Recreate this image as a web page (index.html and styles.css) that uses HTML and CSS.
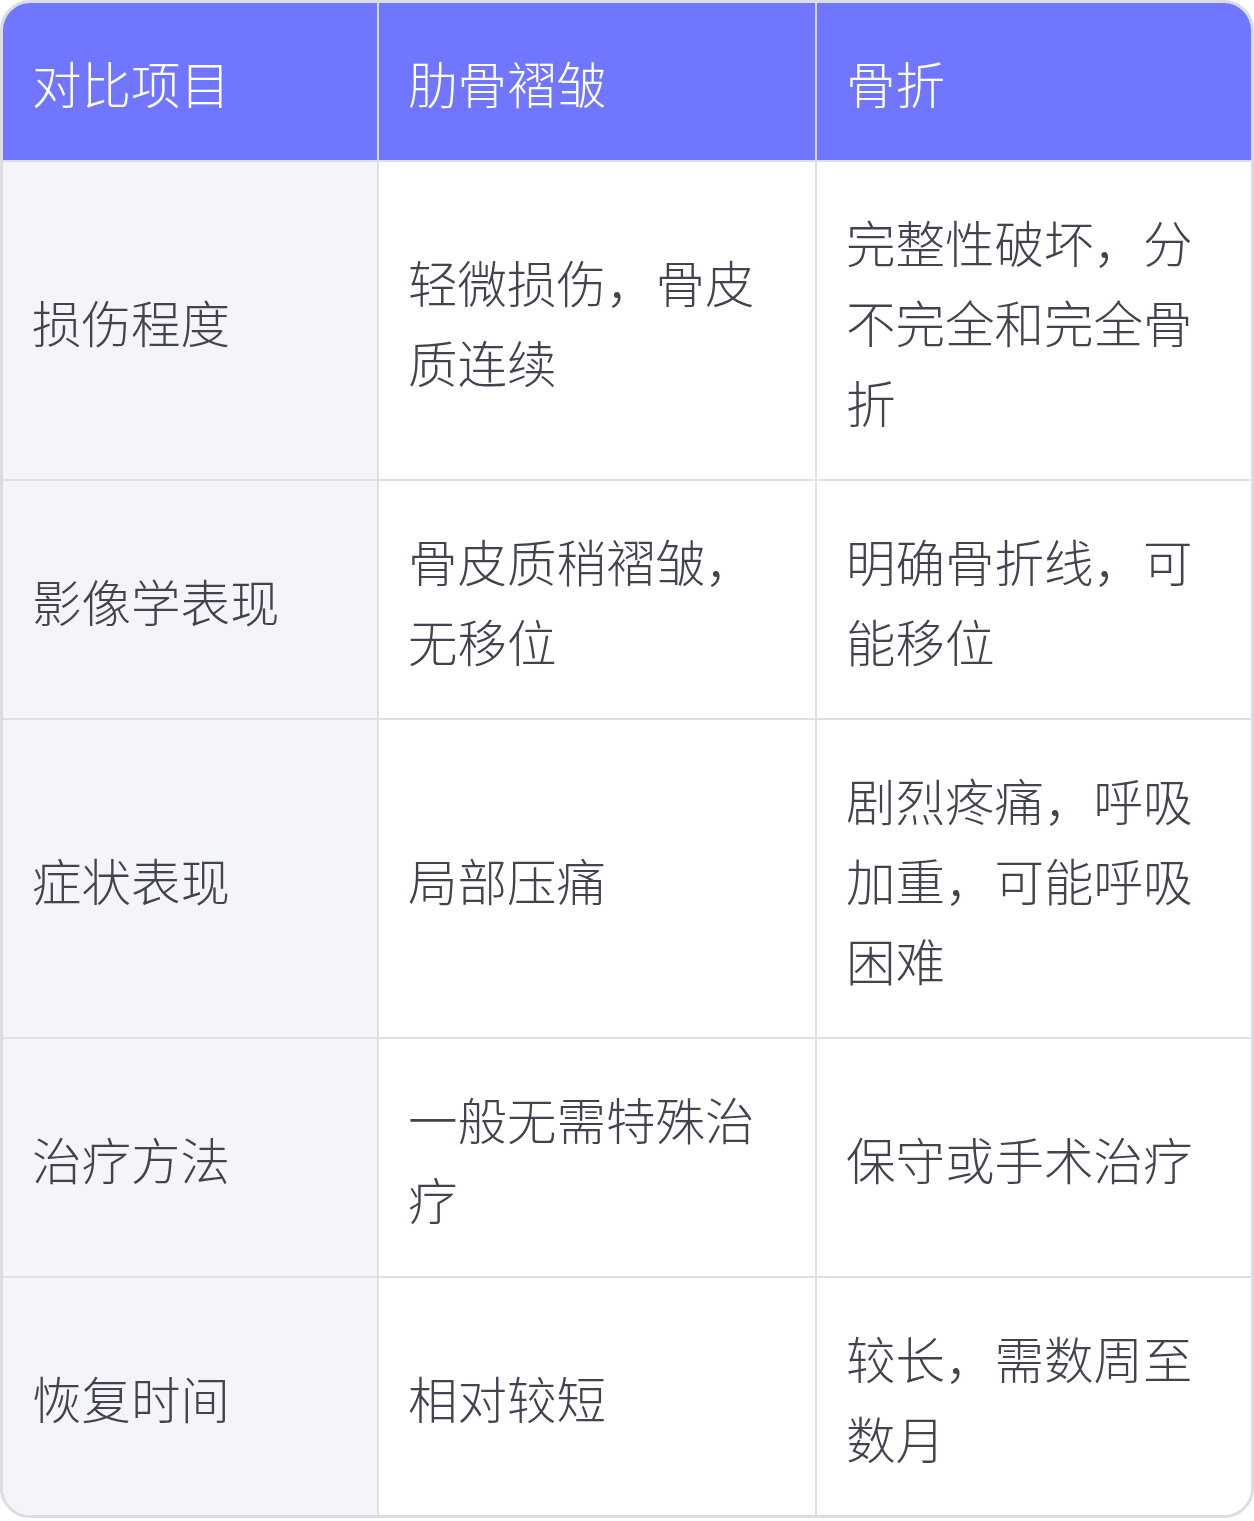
FILE: index.html
```html
<!DOCTYPE html>
<html lang="zh-CN">
<head>
<meta charset="utf-8">
<title>肋骨褶皱与骨折对比</title>
<link rel="stylesheet" href="styles.css">
</head>
<body>
<div class="table">
  <div class="cell head">对比项目</div>
  <div class="cell head">肋骨褶皱</div>
  <div class="cell head last-col">骨折</div>

  <div class="cell label">损伤程度</div>
  <div class="cell">轻微损伤，骨皮质连续</div>
  <div class="cell last-col">完整性破坏，分不完全和完全骨折</div>

  <div class="cell label">影像学表现</div>
  <div class="cell">骨皮质稍褶皱，无移位</div>
  <div class="cell last-col">明确骨折线，可能移位</div>

  <div class="cell label">症状表现</div>
  <div class="cell">局部压痛</div>
  <div class="cell last-col">剧烈疼痛，呼吸加重，可能呼吸困难</div>

  <div class="cell label">治疗方法</div>
  <div class="cell">一般无需特殊治疗</div>
  <div class="cell last-col">保守或手术治疗</div>

  <div class="cell label last-row">恢复时间</div>
  <div class="cell last-row">相对较短</div>
  <div class="cell last-col last-row">较长，需数周至数月</div>
</div>
</body>
</html>
```
FILE: styles.css
```css
html, body {
  margin: 0;
  padding: 0;
  background: #ffffff;
}

.table {
  width: 1254px;
  box-sizing: border-box;
  border: 3px solid #dcdde2;
  border-radius: 30px;
  overflow: hidden;
  display: grid;
  grid-template-columns: 376px 438px 1fr;
  font-family: "Noto Sans CJK SC", "Noto Sans", sans-serif;
  font-weight: 300;
  font-size: 49.5px;
  line-height: 80px;
  color: #41444f;
}

.cell {
  box-sizing: border-box;
  display: flex;
  align-items: center;
  padding: 40px 29px 37px;
  border-right: 2px solid #dfe0e5;
  border-bottom: 2px solid #dfe0e5;
  background: #ffffff;
}

.cell.head {
  background: #7076ff;
  color: #ffffff;
  border-right-color: #d6d8f4;
  border-bottom-color: #dcdde6;
}

.cell.label {
  background: #f4f5f9;
}

.cell.last-col {
  border-right: none;
}

.cell.last-row {
  border-bottom: none;
}
```
